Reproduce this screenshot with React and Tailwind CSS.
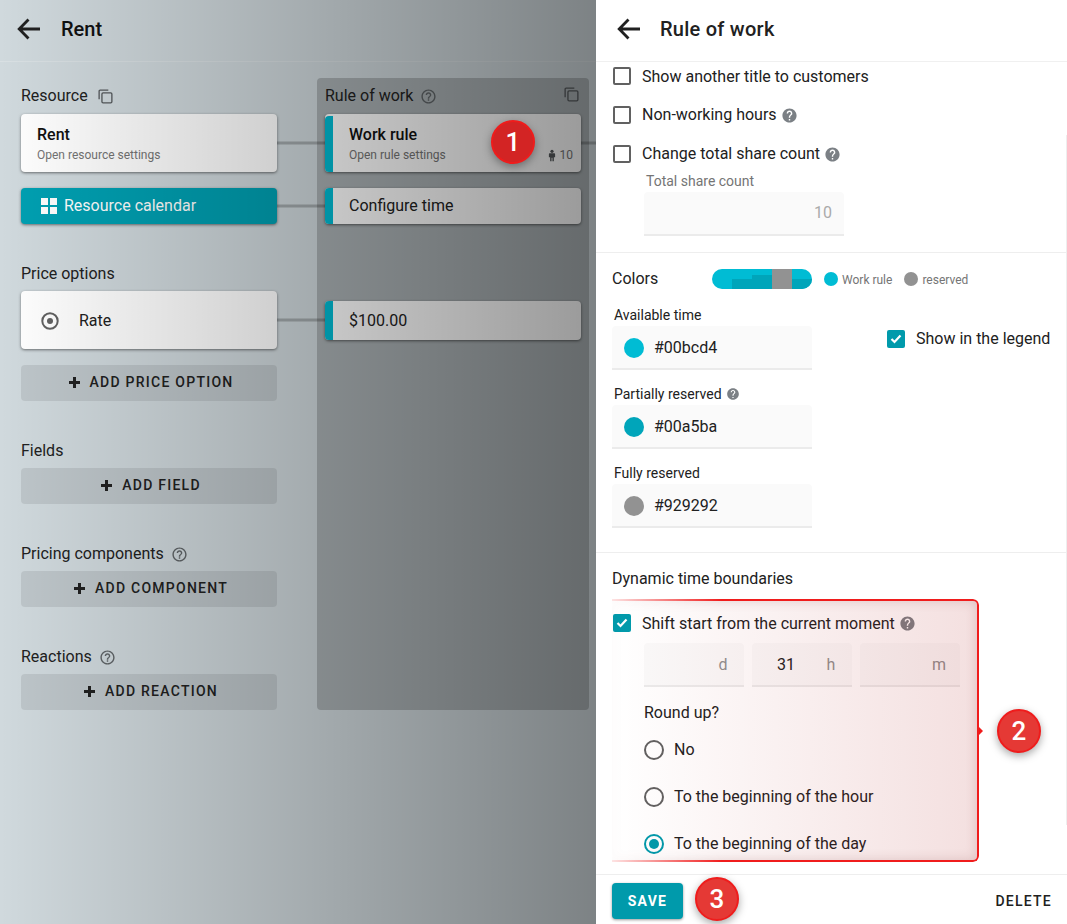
const helpOutline = "M11 18h2v-2h-2v2zm1-16C6.48 2 2 6.48 2 12s4.48 10 10 10 10-4.48 10-10S17.52 2 12 2zm0 18c-4.41 0-8-3.59-8-8s3.59-8 8-8 8 3.59 8 8-3.59 8-8 8zm0-14c-2.21 0-4 1.79-4 4h2c0-1.1.9-2 2-2s2 .9 2 2c0 2-3 1.75-3 5h2c0-2.25 3-2.5 3-5 0-2.21-1.79-4-4-4z";
const helpFilled = "M12 2C6.48 2 2 6.48 2 12s4.48 10 10 10 10-4.48 10-10S17.52 2 12 2zm1 17h-2v-2h2v2zm2.07-7.75l-.9.92C13.45 12.9 13 13.5 13 15h-2v-.5c0-1.1.45-2.1 1.17-2.83l1.24-1.26c.37-.36.59-.86.59-1.41 0-1.1-.9-2-2-2s-2 .9-2 2H8c0-2.21 1.79-4 4-4s4 1.79 4 4c0 .88-.36 1.68-.93 2.25z";

function Back() {
  return (
    <svg width="24" height="22" viewBox="0 0 24 22" fill="none" stroke="#212121" strokeWidth="2.8" className="shrink-0">
      <path d="M23 11H3M11.5 1.5 2.2 11l9.3 9.5" />
    </svg>
  );
}
function HelpO({ className = "" }) {
  return (
    <svg width="17" height="17" viewBox="0 0 24 24" fill="#5f6467" className={className}><path d={helpOutline} /></svg>
  );
}
function HelpF({ size = 17, className = "" }) {
  return (
    <svg width={size} height={size} viewBox="0 0 24 24" fill="#7b8085" className={className}><path d={helpFilled} /></svg>
  );
}
function Copy({ className = "" }) {
  return (
    <svg width="15" height="15" viewBox="0 0 16 16" fill="none" stroke="#55595c" strokeWidth="1.4" className={className}>
      <path d="M1.2 11V2.2a1 1 0 0 1 1-1H11" />
      <rect x="4.2" y="4.2" width="10.6" height="10.6" rx="1.2" />
    </svg>
  );
}
function Plus() {
  return (
    <svg width="11" height="11" viewBox="0 0 11 11" fill="#212121" className="shrink-0">
      <path d="M4 0h3v4h4v3H7v4H4V7H0V4h4z" />
    </svg>
  );
}
function AddBtn({ children }) {
  return (
    <div className="flex h-9 items-center justify-center gap-[10px] rounded-[4px] bg-[#00000016] pb-[2px] pl-[4px] text-sm font-medium tracking-[1.25px] text-[#212121]">
      <Plus />
      <span>{children}</span>
    </div>
  );
}
function Label({ children, icon, className = "" }) {
  return (
    <div className={`flex h-9 items-center gap-[7px] text-base text-[#212121] ${className}`}>
      <span>{children}</span>
      {icon}
    </div>
  );
}
function Line({ w = "w-[48px]" }) {
  return <div className={`absolute left-full top-1/2 h-[3px] -translate-y-1/2 bg-[#00000038] ${w}`} />;
}
function RuleCard({ className = "", children, right }) {
  return (
    <div className={`relative flex rounded-[4px] bg-white shadow-[0_1px_3px_rgba(0,0,0,.5)] ${className}`}>
      <div className="w-2 shrink-0 rounded-l-[4px] bg-[#00bcd4]" />
      <div className="flex min-w-0 flex-1 flex-col justify-center pl-4 pr-2">{children}</div>
      {right && <Line w="w-[15px]" />}
    </div>
  );
}
function Check({ checked }) {
  return checked ? (
    <span className="flex h-[18px] w-[18px] shrink-0 items-center justify-center rounded-[2px] bg-[#009aab]">
      <svg width="12" height="10" viewBox="0 0 12 10" fill="none" stroke="#fff" strokeWidth="2.2"><path d="M1.5 5l3 3 6-6.5" /></svg>
    </span>
  ) : (
    <span className="block h-[18px] w-[18px] shrink-0 rounded-[2px] border-2 border-[#616161]" />
  );
}
function CheckRow({ checked, children, icon, className = "", textClass = "" }) {
  return (
    <div className={`flex h-7 items-center text-base text-[#212121] ${className}`}>
      <span className="ml-px block"><Check checked={checked} /></span>
      <span className={`ml-[11px] ${textClass}`}>{children}</span>
      {icon}
    </div>
  );
}
function ColorField({ color, label, icon, className = "" }) {
  return (
    <div className={className}>
      <div className="mb-px flex h-5 items-center pl-[2px] text-sm text-[#212121]">
        <span>{label}</span>
        {icon}
      </div>
      <div className="flex h-11 w-[200px] items-center rounded-t-[4px] border-b-2 border-[#ebebeb] bg-[#fafafa] pl-3 pt-[2px] text-base text-[#212121]">
        <span className="h-5 w-5 rounded-full" style={{ backgroundColor: color }} />
        <span className="ml-[10px]">{color}</span>
      </div>
    </div>
  );
}
function UnitField({ value, unit }) {
  return (
    <div className="flex h-11 w-[100px] items-center rounded-t-[4px] border-b-2 border-[#ebebeb] bg-[#fafafa] pl-[25px] pr-[13px] pt-[2px] text-base text-[#8f8f8f]">
      {value && <span className="text-[#212121]">{value}</span>}
      <span className="ml-auto w-4 text-center">{unit}</span>
    </div>
  );
}
function Radio({ checked, children }) {
  return (
    <div className="flex h-[47px] items-center text-base text-[#212121]">
      {checked ? (
        <span className="flex h-5 w-5 items-center justify-center rounded-full border-2 border-[#009aab]">
          <span className="h-[10px] w-[10px] rounded-full bg-[#009aab]" />
        </span>
      ) : (
        <span className="h-5 w-5 rounded-full border-2 border-[#616161]" />
      )}
      <span className="ml-[10px]">{children}</span>
    </div>
  );
}
function Badge({ n, className = "" }) {
  return (
    <div className={`pointer-events-none absolute flex h-[44px] w-[44px] items-center justify-center rounded-full border-2 border-[#ef1c1c] text-[26px] font-medium text-white shadow-[0_3px_8px_rgba(0,0,0,.35)] ${className}`}>
      {n}
    </div>
  );
}
const segments = [
  { h: "h-0", bg: "bg-[#00a5ba]" },
  { h: "h-[10px]", bg: "bg-[#00a5ba]" },
  { h: "h-[14px]", bg: "bg-[#00a5ba]" },
  { h: "h-5", bg: "bg-[#929292]" },
  { h: "h-[10px]", bg: "bg-[#00a5ba]" },
];

export default function App() {
  return (
    <div className="relative flex h-[924px] w-[1067px] overflow-hidden bg-white [font-family:Roboto,sans-serif]">
      {/* left, dimmed page */}
      <div className="relative h-full w-[596px] shrink-0 bg-[#d0d9dd]">
        <div className="flex h-[62px] items-center border-b border-[#ffffff30] pl-[17px] pb-[4px]">
          <Back />
          <span className="ml-[20px] text-xl font-medium text-[#111]">Rent</span>
        </div>
        <div className="flex pl-[21px] pt-4">
          <div className="w-64">
            <Label icon={<Copy className="ml-[3px]" />}>Resource</Label>
            <div className="relative flex h-[58px] flex-col justify-center rounded-[4px] bg-white pl-4 pt-[2px] shadow-[0_1px_3px_rgba(0,0,0,.5)]">
              <div className="text-base font-medium leading-5 text-[#111]">Rent</div>
              <div className="mt-[2px] text-xs text-[#757575]">Open resource settings</div>
              <Line />
            </div>
            <div className="relative mt-4 flex h-9 items-center rounded-[4px] bg-[#00a0b2] pl-5 text-base text-white shadow-[0_1px_3px_rgba(0,0,0,.5)]">
              <span className="grid h-4 w-4 grid-cols-2 gap-[2px]">
                <span className="bg-white" /><span className="bg-white" /><span className="bg-white" /><span className="bg-white" />
              </span>
              <span className="ml-[7px]">Resource calendar</span>
              <Line />
            </div>
            <div className="mt-[31px]"><Label className="pt-[2px]">Price options</Label></div>
            <div className="relative flex h-[58px] items-center rounded-[4px] bg-white pl-5 pt-[2px] text-base text-[#212121] shadow-[0_1px_3px_rgba(0,0,0,.5)]">
              <svg width="18" height="18" viewBox="0 0 18 18" fill="none">
                <circle cx="9" cy="9" r="7.7" stroke="#616161" strokeWidth="2" />
                <circle cx="9" cy="9" r="3" fill="#616161" />
              </svg>
              <span className="ml-[20px]">Rate</span>
              <Line />
            </div>
            <div className="mt-4"><AddBtn>ADD PRICE OPTION</AddBtn></div>
            <div className="mt-[31px]"><Label className="pt-[2px]">Fields</Label></div>
            <AddBtn>ADD FIELD</AddBtn>
            <div className="mt-[31px]"><Label className="pt-[2px]" icon={<HelpO />}>Pricing components</Label></div>
            <AddBtn>ADD COMPONENT</AddBtn>
            <div className="mt-[31px]"><Label className="pt-[2px]" icon={<HelpO />}>Reactions</Label></div>
            <AddBtn>ADD REACTION</AddBtn>
          </div>
          <div className="ml-10 h-[632px] w-[272px] rounded-[4px] bg-[#00000030] px-2">
            <div className="flex h-9 items-center gap-[7px] text-base text-[#212121]">
              <span>Rule of work</span>
              <HelpO />
              <Copy className="mb-[3px] ml-auto mr-[2px]" />
            </div>
            <RuleCard className="h-[58px] pt-[2px]" right>
              <div className="text-base font-medium leading-5 text-[#111]">Work rule</div>
              <div className="mt-[2px] flex items-center justify-between text-xs text-[#757575]">
                <span>Open rule settings</span>
                <span className="flex items-center gap-1">
                  <svg width="8" height="13" viewBox="0 0 9 13" fill="#55595c">
                    <circle cx="4.5" cy="1.8" r="1.8" />
                    <path d="M1.8 4h5.4A1 1 0 0 1 8 5v3.500H6.600V13H5V9H4v4H2.400V8.500H1V5a1 1 0 0 1 .8-1z" />
                  </svg>
                  10
                </span>
              </div>
            </RuleCard>
            <RuleCard className="mt-4 h-9"><div className="text-base text-[#212121]">Configure time</div></RuleCard>
            <RuleCard className="mt-[77px] h-[39px]"><div className="text-base text-[#212121]">$100.00</div></RuleCard>
          </div>
        </div>
        {/* modal backdrop falling over the page */}
        <div className="pointer-events-none absolute inset-0 bg-gradient-to-r from-[#00000000] to-[#00000066]" />
      </div>

      {/* right, drawer */}
      <div className="flex h-full w-[471px] shrink-0 flex-col bg-white">
        <div className="flex h-[62px] shrink-0 items-center border-b border-[#f0f0f0] pl-[21px] pb-[4px]">
          <Back />
          <span className="ml-[19px] text-xl font-medium tracking-[.25px] text-[#212121]">Rule of work</span>
        </div>
        <div className="min-h-0 flex-1 overflow-hidden">
          <section className="border-b border-[#eeeeee] pl-4 pb-4">
            <CheckRow textClass="mt-[2px]">Show another title to customers</CheckRow>
            <CheckRow className="mt-[11px]" icon={<HelpF className="ml-1" />}>Non-working hours</CheckRow>
            <CheckRow className="mt-[11px]" icon={<HelpF className="ml-1" />}>Change total share count</CheckRow>
            <div className="ml-8 mt-[3px]">
              <div className="mb-px flex h-5 items-center pl-[2px] text-sm text-[#757575]">Total share count</div>
              <div className="flex h-11 w-[200px] items-center justify-end rounded-t-[4px] border-b-2 border-[#ebebeb] bg-[#fafafa] pr-3 text-base text-[#aaaaaa]">10</div>
            </div>
          </section>
          <section className="border-b border-[#eeeeee] pl-4 pb-6 pt-4">
            <div className="flex h-5 items-center">
              <span className="w-[100px] text-base text-[#212121]">Colors</span>
              <div className="flex h-5 w-[100px] overflow-hidden rounded-full bg-[#00bcd4]">
                {segments.map((s, i) => (
                  <div key={i} className="flex w-5 flex-col justify-end">
                    <div className={`${s.h} ${s.bg}`} />
                  </div>
                ))}
              </div>
              <span className="ml-3 h-[14px] w-[14px] rounded-full bg-[#00bcd4]" />
              <span className="ml-1 mt-[2px] text-xs text-[#757575]">Work rule</span>
              <span className="ml-3 h-[14px] w-[14px] rounded-full bg-[#929292]" />
              <span className="ml-1 mt-[2px] text-xs text-[#757575]">reserved</span>
            </div>
            <div className="mt-4 flex items-start">
              <div className="w-[275px]">
                <ColorField color="#00bcd4" label="Available time" />
                <ColorField className="mt-[14px]" color="#00a5ba" label="Partially reserved" icon={<HelpF size={14} className="ml-1" />} />
                <ColorField className="mt-[14px]" color="#929292" label="Fully reserved" />
              </div>
              <div className="mt-5 flex h-7 items-center text-base text-[#212121]">
                <Check checked />
                <span className="ml-[11px]">Show in the legend</span>
              </div>
            </div>
          </section>
          <section className="pl-4 pt-[15px]">
            <div className="flex h-5 items-center pt-[2px] text-base text-[#212121]">Dynamic time boundaries</div>
            <CheckRow checked className="mt-[21px]" textClass="mt-[2px]" icon={<HelpF className="ml-1" />}>Shift start from the current moment</CheckRow>
            <div className="ml-8 mt-[6px] flex gap-2">
              <UnitField unit="d" />
              <UnitField value="31" unit="h" />
              <UnitField unit="m" />
            </div>
            <div className="ml-8 mt-[15px] flex h-5 items-center pt-[2px] text-base text-[#212121]">Round up?</div>
            <div className="ml-8 mt-1">
              <Radio>No</Radio>
              <Radio>To the beginning of the hour</Radio>
              <Radio checked>To the beginning of the day</Radio>
            </div>
          </section>
        </div>
        <div className="flex h-[50px] shrink-0 items-start justify-between border-t border-[#eeeeee] bg-white pl-4 pr-[15px] pt-2">
          <div className="flex h-9 w-[71px] items-center justify-center rounded-[4px] bg-[#009aab] text-sm font-bold tracking-[1.25px] text-white shadow-[0_1px_3px_rgba(0,0,0,.4)]">SAVE</div>
          <div className="flex h-9 items-center text-sm font-medium tracking-[1.25px] text-[#212121]">DELETE</div>
        </div>
      </div>

      {/* thin scroll track edge */}
      <div className="pointer-events-none absolute left-[1066px] top-[135px] h-[690px] w-px bg-[#eeeeee]" />

      {/* annotation 2: highlight frame */}
      <div className="pointer-events-none absolute left-[612px] top-[599px] h-[263px] w-[367px] rounded-r-[6px] bg-gradient-to-r from-[#d0202000] to-[#b0202024]">
        <div className="absolute inset-0 rounded-r-[6px] border-y-2 border-r-2 border-[#f01c1c] shadow-[inset_0_0_12px_rgba(120,40,40,.18)] [mask-image:linear-gradient(to_right,rgba(0,0,0,.12),black_30%)]" />
        <svg width="6" height="10" viewBox="0 0 6 10" className="absolute left-[366px] top-[127px]">
          <path d="M0 0l5 5-5 5z" fill="#f01c1c" />
        </svg>
      </div>

      <Badge n="1" className="left-[491px] top-[120px] bg-[#d32424]" />
      <Badge n="2" className="left-[997px] top-[709px] bg-[#e53935]" />
      <Badge n="3" className="left-[695px] top-[877px] bg-[#e53935]" />
    </div>
  );
}
